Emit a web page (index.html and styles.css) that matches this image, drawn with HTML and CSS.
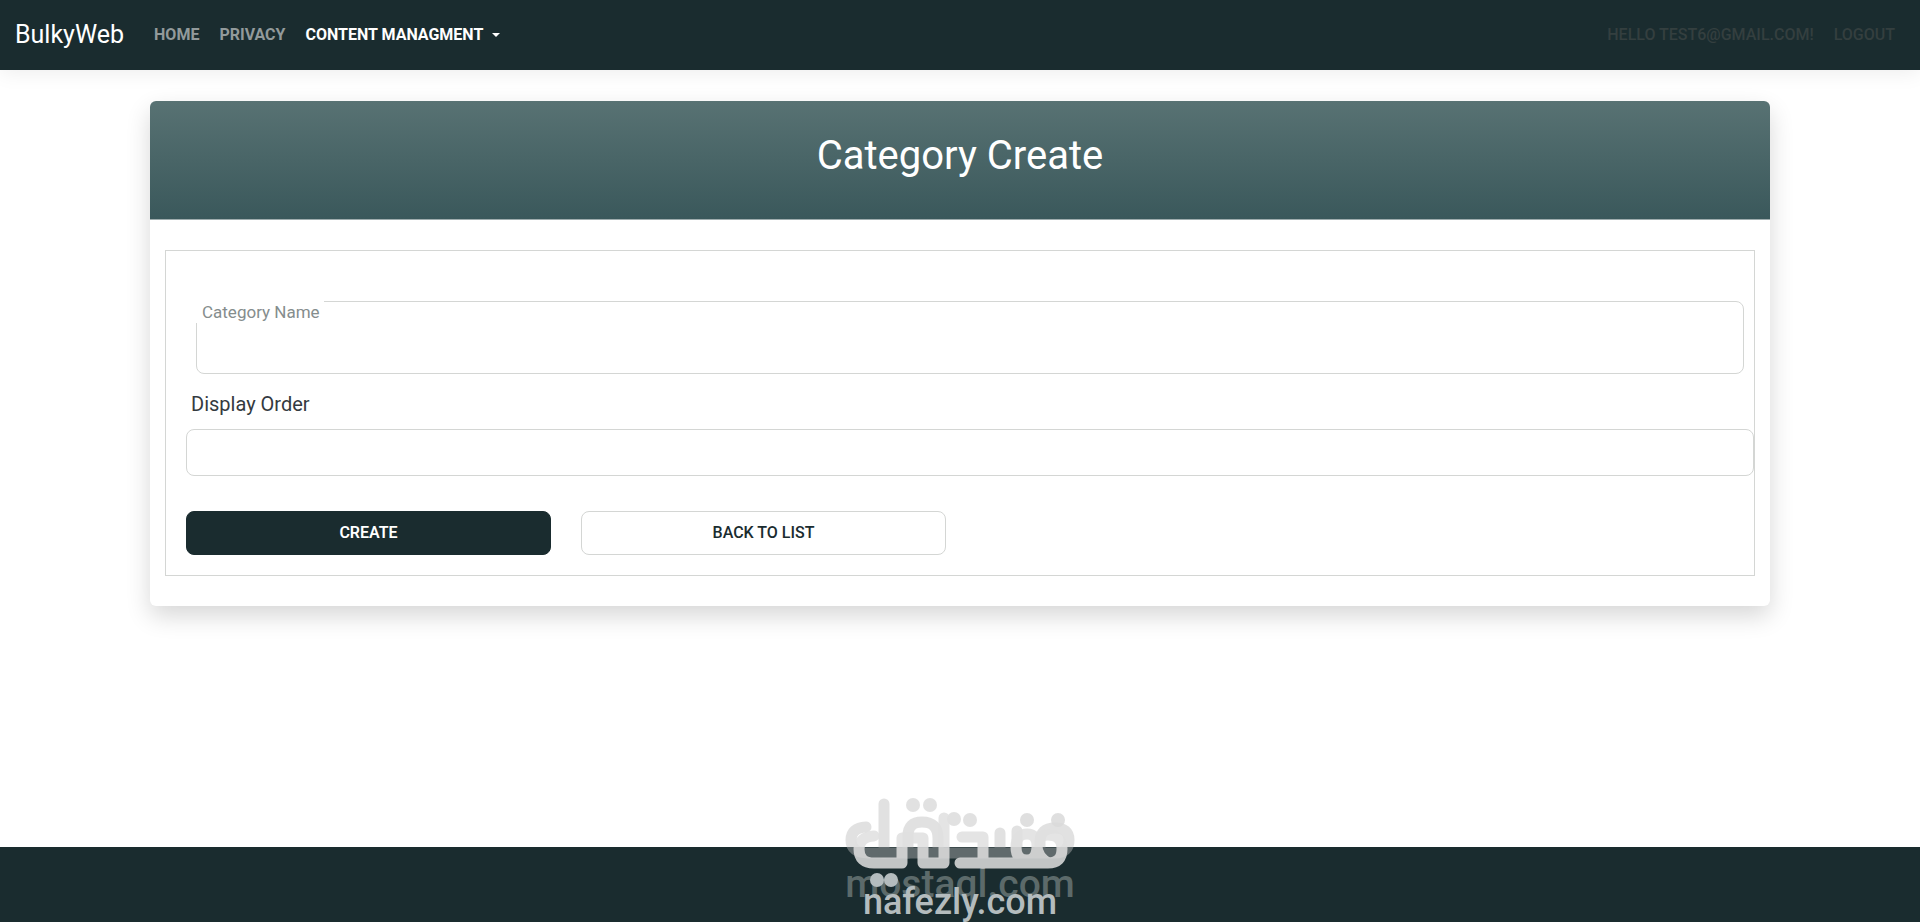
FILE: index.html
```html
<!DOCTYPE html>
<html lang="en">
<head>
<meta charset="utf-8">
<meta name="viewport" content="width=device-width, initial-scale=1">
<title>Category Create - BulkyWeb</title>
<link rel="stylesheet" href="styles.css">
</head>
<body>
<header class="navbar">
  <a class="brand" href="#">BulkyWeb</a>
  <nav class="nav">
    <a class="nav-link" href="#">Home</a>
    <a class="nav-link" href="#">Privacy</a>
    <button class="nav-link nav-toggle" type="button">Content Managment <span class="caret"></span></button>
  </nav>
  <nav class="nav nav-user">
    <a class="nav-link nav-dim" href="#">Hello test6@gmail.com!</a>
    <button class="nav-link nav-dim" type="button">Logout</button>
  </nav>
</header>
<main class="main">
  <section class="card">
    <div class="card-header"><h1 class="card-title">Category Create</h1></div>
    <div class="card-body">
      <form class="form">
        <div class="floating">
          <input class="control control-tall" id="name" type="text">
          <label class="floating-label" for="name">Category Name</label>
        </div>
        <label class="label" for="order">Display Order</label>
        <input class="control" id="order" type="text">
        <div class="actions">
          <button class="btn btn-primary" type="submit">Create</button>
          <a class="btn btn-outline" href="#">Back to List</a>
        </div>
      </form>
    </div>
  </section>
</main>
<footer class="footer"></footer>
<div class="watermark">
  <svg class="mark" viewBox="0 0 240 100" aria-hidden="true">
    <g class="mark-back">
      <path d="M44 14V63H28Q11 63 11 50Q11 38 26 37"/>
      <path d="M44 63H215Q229 63 229 50Q229 38 215 38Q200 38 200 52V63"/>
      <path d="M68 63V46Q68 32 82 32Q98 32 98 48V63M160 43V63M177 41V63"/>
      <g class="dots"><circle cx="73" cy="15" r="7"/><circle cx="90" cy="15" r="7"/><circle cx="114" cy="29" r="7"/><circle cx="130" cy="30" r="7"/></g>
    </g>
    <g class="mark-front">
      <path d="M34 46Q19 47 19 59Q19 73 34 73H62V48H83V73H104V28"/>
      <path d="M122 47H143V73"/>
      <path d="M120 73H208Q222 73 222 59Q222 45 208 45Q197 45 197 56Q197 70 187 70Q176 70 176 57Q176 44 187 44Q197 44 197 56Q197 66 208 73"/>
      <g class="dots"><circle cx="187" cy="30" r="7"/><circle cx="218" cy="30" r="7"/></g>
    </g>
    <g class="mark-dots"><circle cx="37" cy="90" r="7"/><circle cx="51" cy="90" r="7"/></g>
  </svg>
  <span class="watermark-back">mostaql.com</span>
  <span class="watermark-front">nafezly.com</span>
</div>
</body>
</html>
```
FILE: styles.css
```css
* { box-sizing: border-box; }
body {
  margin: 0;
  min-height: 100vh;
  display: flex;
  flex-direction: column;
  position: relative;
  background: #fff;
  color: #343a40;
  font: 16px/24px Roboto, sans-serif;
}
a { text-decoration: none; }
button { font: inherit; cursor: pointer; }
.navbar {
  display: flex;
  align-items: center;
  height: 70px;
  padding: 0 15px;
  background: #1a2c2f;
  box-shadow: 0 2px 20px rgba(0, 0, 0, .08);
}
.brand { margin-right: 20px; color: #fff; font-size: 25px; }
.nav { display: flex; }
.nav-user { margin-left: auto; }
.nav-link {
  display: flex;
  align-items: center;
  gap: 9px;
  padding: 8px 10px;
  border: 0;
  background: none;
  color: #929a9b;
  font-weight: 700;
  text-transform: uppercase;
}
.nav-toggle { color: #fff; }
.nav-dim { color: #343f3f; font-weight: 500; }
.caret { border: 4px solid transparent; border-top-color: currentColor; border-bottom: 0; }
.main { flex: 1; padding: 31px 12px; }
.card {
  max-width: 1620px;
  margin: 0 auto;
  border-radius: 6px;
  background: #fff;
  box-shadow: 0 10px 24px rgba(0, 0, 0, .16);
}
.card-header {
  padding: 31px 16px 39px;
  border-bottom: 1px solid #9fadae;
  border-radius: 6px 6px 0 0;
  background: linear-gradient(#587273, #3a585b);
}
.card-title { margin: 0; color: #fff; font-size: 40px; line-height: 48px; font-weight: 400; text-align: center; }
.card-body { padding: 30px 15px; }
.form { padding: 50px 0 20px 20px; border: 1px solid #d4d6d4; }
.floating { position: relative; margin: 0 10px 16px; }
.floating-label {
  position: absolute;
  top: 0;
  left: 0;
  padding: 0 4px 0 6px;
  background: #fff;
  color: #858d8d;
  font-size: 17px;
  line-height: 22px;
}
.control {
  display: block;
  width: 100%;
  height: 47px;
  padding: 8px 12px;
  border: 1px solid #d4d6d4;
  border-radius: 8px;
  background: transparent;
  font: inherit;
}
.control-tall { height: 73px; }
.label { display: block; margin: 0 0 11px 5px; font-size: 20px; line-height: 28px; }
.actions { display: flex; gap: 30px; padding-top: 35px; }
.btn {
  width: 365px;
  padding: 9px 16px;
  border: 1px solid #1a2c2f;
  border-radius: 8px;
  font-weight: 600;
  text-align: center;
  text-transform: uppercase;
}
.btn-primary { background: #1a2c2f; color: #fff; }
.btn-outline { border-color: #d4d6d4; color: #1a2c2f; font-weight: 500; }
.footer { height: 75px; background: #1a2c2f; }
.watermark {
  position: absolute;
  left: 50%;
  bottom: 0;
  width: 240px;
  height: 132px;
  margin-left: -120px;
  pointer-events: none;
}
.mark { position: relative; z-index: 1; display: block; width: 240px; height: 100px; }
.mark path { fill: none; stroke-width: 11; stroke-linecap: round; stroke-linejoin: round; }
.mark-back { opacity: .43; stroke: #bcbcbc; }
.mark-front { opacity: .85; stroke: #e0e0e0; }
.mark-back .dots { fill: #bcbcbc; stroke: none; }
.mark-front .dots { fill: #dadada; stroke: none; }
.mark-dots { fill: #b4bcbe; }
.watermark-back, .watermark-front {
  position: absolute;
  left: 0;
  width: 100%;
  font-weight: 500;
  text-align: center;
}
.watermark-back { bottom: 26px; color: #5c6a6a; font-size: 39px; }
.watermark-front { bottom: 8px; color: #b4bcbe; font-size: 36px; }
```
